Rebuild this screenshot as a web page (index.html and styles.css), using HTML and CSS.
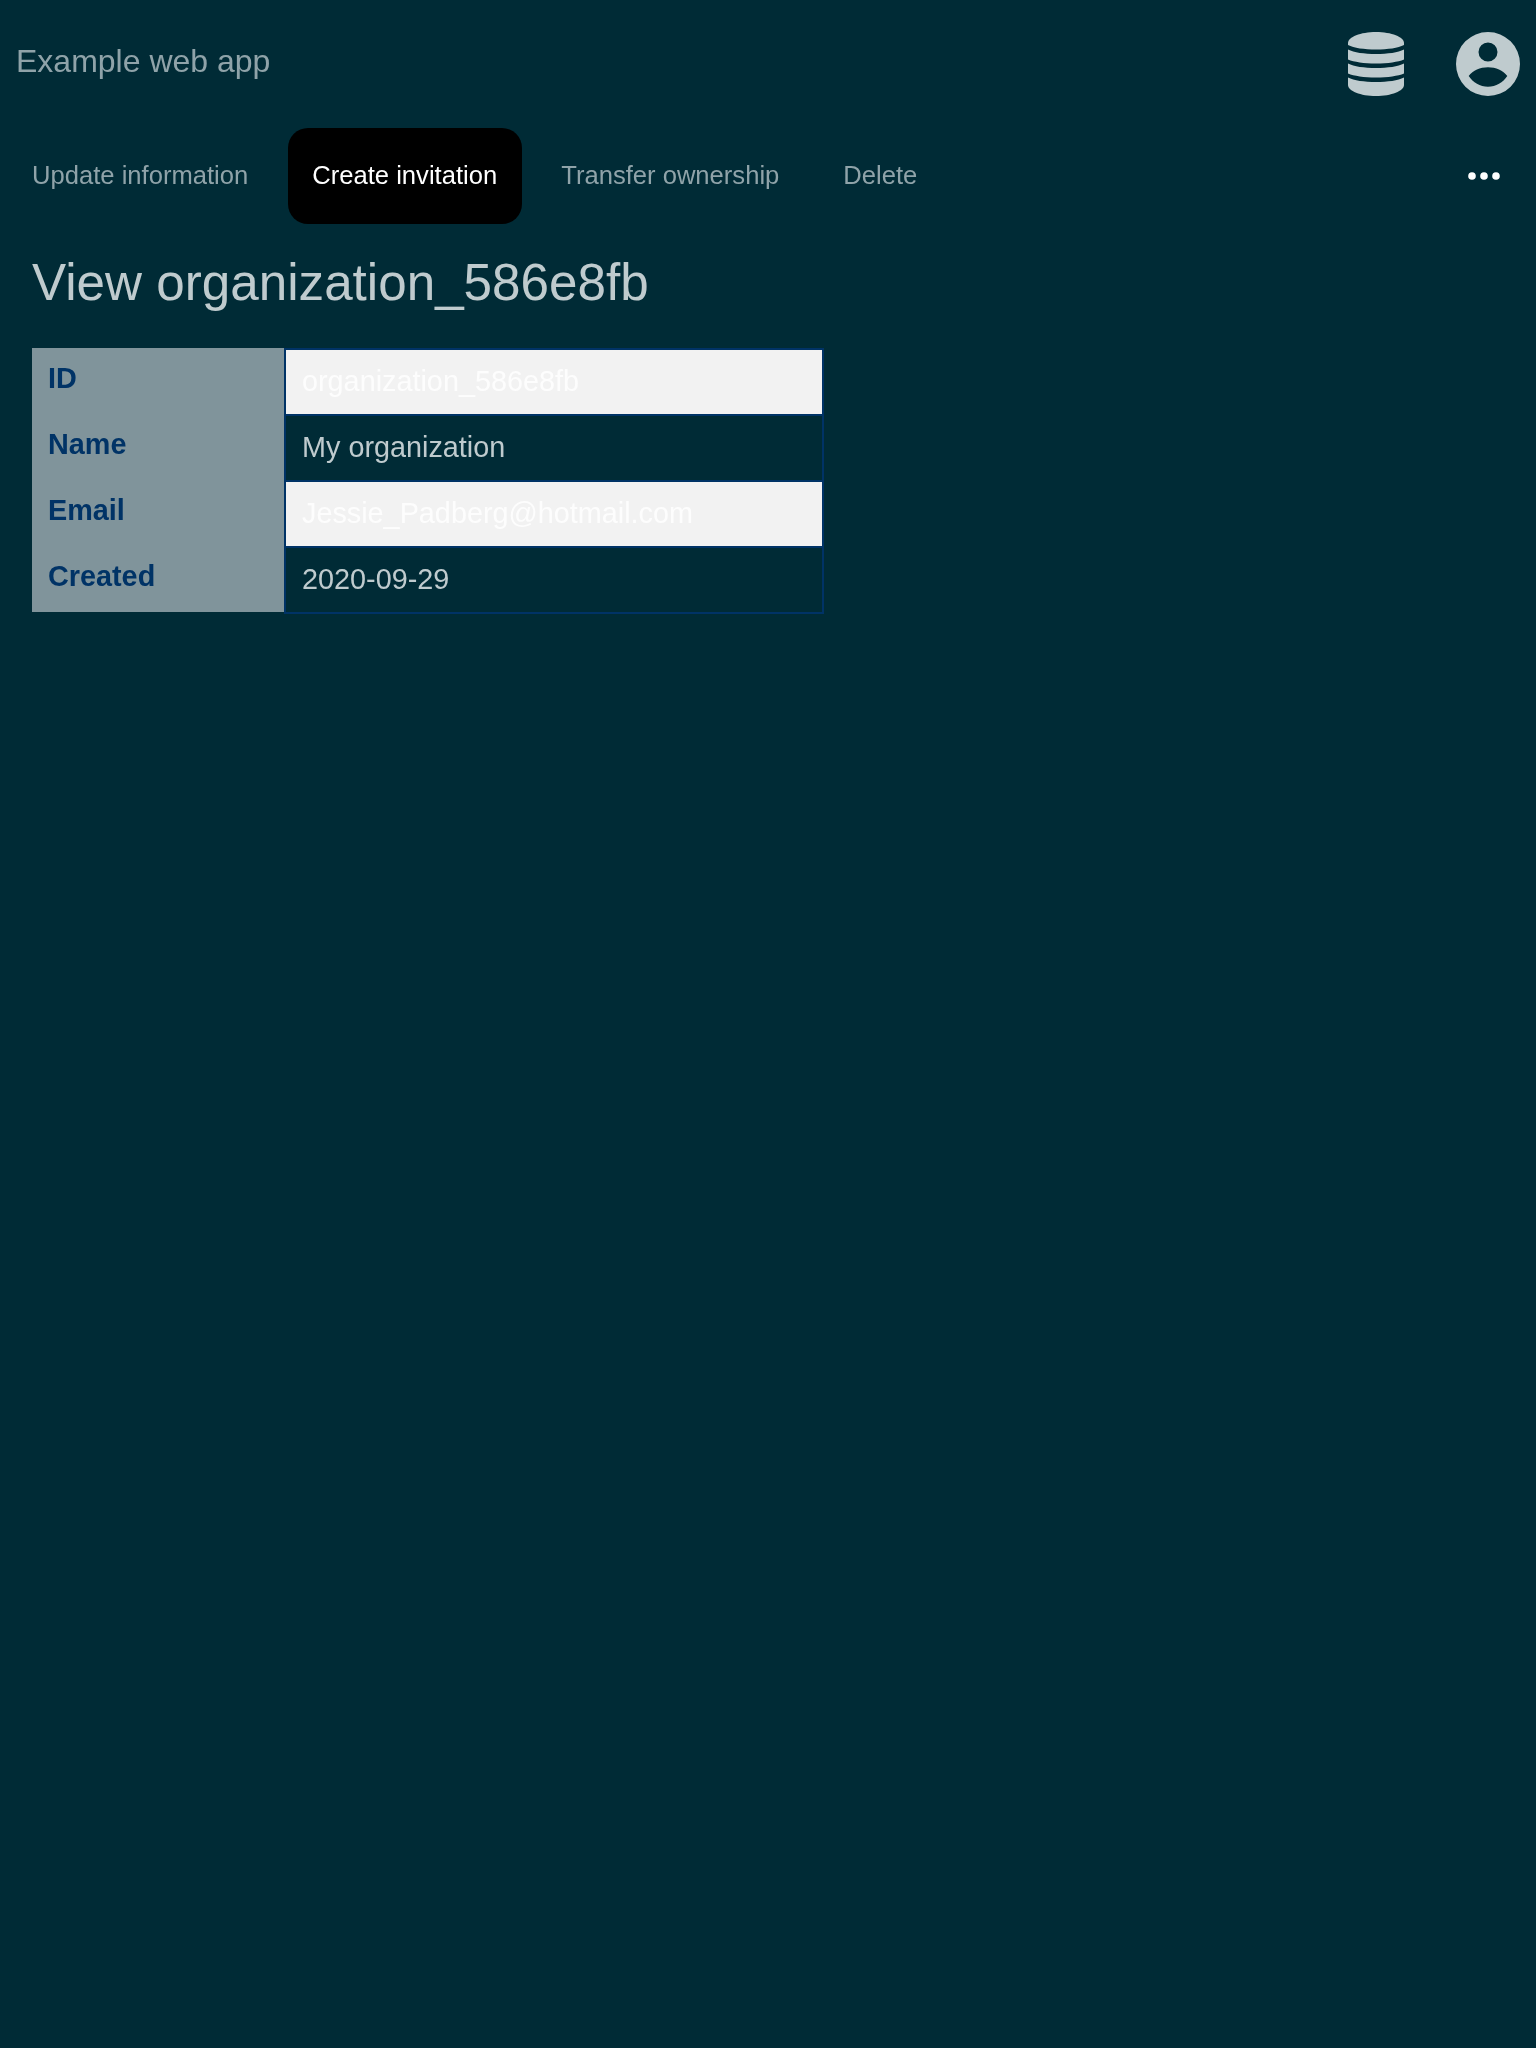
FILE: index.html
```html
<!DOCTYPE html>
<html lang="en">
<head>
    <meta charset="UTF-8">
    <meta name="viewport" content="width=device-width, initial-scale=1.0">
    <title>Example web app</title>
    <link rel="stylesheet" href="styles.css">
</head>
<body>
    <header class="topbar">
        <a class="brand">Example web app</a>
        <div class="topbar-icons">
            <svg class="icon-db" viewBox="0 0 56 64" width="56" height="64">
                <path d="M0 11C0 5 12.500 0 28 0s28 5 28 11v2c-6 3-16 4.500-28 4.500S6 16 0 13z"/>
                <path d="M0 17.500C6 20.500 16 22 28 22s22-1.500 28-4.500v10c-6 2.500-16 4-28 4s-22-1.500-28-4z"/>
                <path d="M0 31.500C6 34.500 16 36 28 36s22-1.500 28-4.500v10c-6 2.500-16 4-28 4s-22-1.500-28-4z"/>
                <path d="M0 45.500C6 48.500 16 50 28 50s22-1.500 28-4.500V53C56 59 43.500 64 28 64S0 59 0 53z"/>
            </svg>
            <svg class="icon-user" viewBox="0 0 64 64" width="64" height="64">
                <path fill-rule="evenodd" d="M32 0a32 32 0 1 1 0 64a32 32 0 1 1 0-64zM32 10.500a9.500 9.500 0 1 0 0 19a9.500 9.500 0 1 0 0-19zM12.700 44C17 38.500 24 35.300 32 35.300s15 3.200 19.300 8.700C47 50.500 40 54.700 32 54.700S17 50.500 12.700 44z"/>
            </svg>
        </div>
    </header>

    <nav class="actions">
        <a class="action">Update information</a>
        <a class="action active">Create invitation</a>
        <a class="action">Transfer ownership</a>
        <a class="action">Delete</a>
        <button class="more" aria-label="More">
            <svg viewBox="0 0 32 8" width="32" height="8">
                <circle cx="4" cy="4" r="3.800"/>
                <circle cx="16" cy="4" r="3.800"/>
                <circle cx="28" cy="4" r="3.800"/>
            </svg>
        </button>
    </nav>

    <main class="content">
        <h1>View organization_586e8fb</h1>
        <table class="details">
            <tr><th>ID</th><td>organization_586e8fb</td></tr>
            <tr><th>Name</th><td>My organization</td></tr>
            <tr><th>Email</th><td>Jessie_Padberg@hotmail.com</td></tr>
            <tr><th>Created</th><td>2020-09-29</td></tr>
        </table>
    </main>
</body>
</html>
```

FILE: styles.css
```css
* {
    margin: 0;
    padding: 0;
    box-sizing: border-box;
}
html, body {
    min-height: 2048px;
}
body {
    font-family: "Liberation Sans", Arial, sans-serif;
    background-color: #002b36;
    color: #bfcbce;
    will-change: transform;
}
.topbar {
    display: flex;
    align-items: center;
    justify-content: space-between;
    height: 128px;
    padding: 0 16px;
}
.brand {
    font-size: 32px;
    color: #8fa3a9;
    padding-bottom: 6px;
}
.topbar-icons {
    display: flex;
    align-items: center;
    gap: 52px;
}
.topbar-icons svg {
    display: block;
    fill: #bfcbce;
}
.actions {
    display: flex;
    align-items: center;
    gap: 16px;
    height: 96px;
    padding: 0 8px;
}
.action {
    display: flex;
    align-items: center;
    height: 96px;
    padding: 0 24px 2px;
    font-size: 25.6px;
    color: #8fa3a9;
    border-radius: 20px;
}
.action.active {
    background-color: #000;
    color: #fff;
    padding-right: 25px;
    margin-right: -1px;
}
.more {
    margin-left: auto;
    margin-right: 28px;
    background: none;
    border: none;
}
.more svg {
    display: block;
    fill: #fff;
}
.content {
    padding: 27px 32px;
}
h1 {
    font-size: 51.2px;
    font-weight: normal;
    line-height: 64px;
    margin-bottom: 33px;
}
.details {
    border-collapse: separate;
    border-spacing: 0;
    width: 792px;
    table-layout: fixed;
}
.details th {
    width: 252px;
    height: 66px;
    padding: 0 16px 6px;
    background-color: #80949b;
    background-clip: padding-box;
    color: #003366;
    font-size: 28.8px;
    text-align: left;
}
.details td {
    height: 66px;
    padding: 0 16px 2px;
    border: 2px solid #003366;
    border-bottom: none;
    font-size: 28.8px;
}
.details tr:nth-child(odd) td {
    background-color: #f2f2f2;
    background-clip: padding-box;
    color: #fdfdfd;
}
.details tr:last-child th {
    height: 68px;
    border-bottom: 2px solid transparent;
}
.details tr:last-child td {
    height: 68px;
    border-bottom: 2px solid #003366;
}
```
